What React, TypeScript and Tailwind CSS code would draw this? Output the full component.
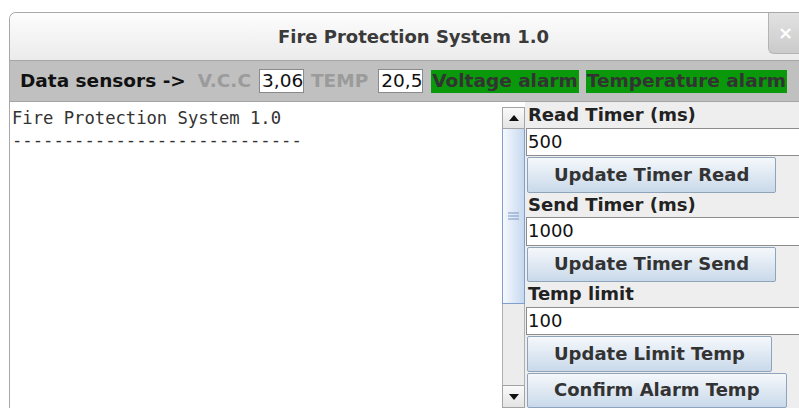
import React from 'react';

const sans = { fontFamily: '"DejaVu Sans", "Liberation Sans", sans-serif' };
const mono = { fontFamily: '"DejaVu Sans Mono", "Liberation Mono", monospace' };

const ArrowUp = () => (
  <svg width="10" height="6" viewBox="0 0 10 6">
    <polygon points="0,6 10,6 5,0" fill="#111" />
  </svg>
);

const ArrowDown = () => (
  <svg width="10" height="6" viewBox="0 0 10 6">
    <polygon points="0,0 10,0 5,6" fill="#111" />
  </svg>
);

const Field = ({ value }: { value: string }) => (
  <div className="h-[29px] ml-[1px] bg-white border border-[#8c8c8c] border-r-0 flex items-center pl-[1px] text-[18px] text-[#111] leading-none">
    {value}
  </div>
);

const Button = ({ label }: { label: string }) => (
  <div className="self-start h-[36px] ml-[2px] px-[26px] flex items-center rounded-[2px] border border-[#8ea4bb] bg-gradient-to-b from-[#f5f8fb] to-[#c9d9ea] text-[18px] font-bold text-[#333] leading-none">
    {label}
  </div>
);

const Label = ({ text }: { text: string }) => (
  <div className="h-[23px] pl-[3px] flex items-center text-[18px] font-bold text-[#222] leading-none">
    {text}
  </div>
);

export default function App() {
  return (
    <div className="w-[799px] h-[408px] overflow-hidden bg-white" style={sans}>
      <div className="ml-[9px] mt-[12px] h-[396px] flex flex-col border-l border-t border-[#a8a8a8] rounded-tl-[7px] overflow-hidden">
        {/* title bar */}
        <div className="relative h-[48px] shrink-0 flex items-center justify-center pl-[18px] bg-gradient-to-b from-[#fdfdfd] to-[#ebebeb] border-b border-[#a6a6a6]">
          <span className="text-[18px] font-bold text-[#3a3a3a]">Fire Protection System 1.0</span>
          <div className="absolute right-0 top-0 w-[31px] h-[41px] rounded-bl-[6px] border-l border-b border-[#b4b4b4] bg-gradient-to-b from-[#e2e2e2] to-[#cbcbcb] flex items-center justify-center">
            <span className="text-white text-[18px] font-bold leading-none ml-[3px]">×</span>
          </div>
        </div>

        {/* sensor bar */}
        <div className="h-[41px] shrink-0 flex items-center bg-[#c0c0c0] border-b border-[#a5a5a5] text-[18.5px] font-bold whitespace-nowrap">
          <span className="ml-[10px] text-[#111]">Data sensors -&gt;</span>
          <span className="ml-[12px] text-[#9b9b9b]">V.C.C</span>
          <span className="ml-[8px] h-[24px] w-[45px] px-[2px] bg-white border border-[#8a8a8a] font-normal text-[#111] flex items-center leading-none">3,06</span>
          <span className="ml-[7px] text-[#9b9b9b]">TEMP</span>
          <span className="ml-[10px] h-[24px] w-[45px] px-[2px] bg-white border border-[#8a8a8a] font-normal text-[#111] flex items-center leading-none">20,5</span>
          <span className="ml-[8px] h-[23px] px-[1px] bg-[#0a990a] text-[#333] flex items-center leading-none">Voltage alarm</span>
          <span className="ml-[7px] h-[23px] px-[1px] bg-[#0a990a] text-[#333] flex items-center leading-none">Temperature alarm</span>
        </div>

        {/* body */}
        <div className="flex-1 flex min-h-0">
          <div className="w-[492px] shrink-0 bg-white pt-[5px] pl-[2px] text-[17.2px] leading-[22px] text-[#333]" style={mono}>
            <div>Fire Protection System 1.0</div>
            <div>----------------------------</div>
          </div>

          {/* scroll bar */}
          <div className="w-[23px] shrink-0 pt-[5px] bg-white flex flex-col">
            <div className="h-[22px] shrink-0 border border-[#a4a4a4] bg-gradient-to-b from-[#fafafa] to-[#e4e4e4] flex items-center justify-center">
              <ArrowUp />
            </div>
            <div className="h-[175px] shrink-0 border border-t-0 border-[#7f9fce] bg-gradient-to-r from-[#f6f9fd] to-[#c7d9ef] flex items-center justify-center">
              <svg width="11" height="8" viewBox="0 0 11 8">
                <path d="M0 1h11M0 4h11M0 7h11" stroke="#7896c4" strokeWidth="1" />
              </svg>
            </div>
            <div className="flex-1 border-x border-[#b0b0b0] bg-[#ececec]" />
            <div className="h-[23px] shrink-0 border border-[#a4a4a4] bg-gradient-to-b from-[#fafafa] to-[#e4e4e4] flex items-center justify-center">
              <ArrowDown />
            </div>
          </div>

          {/* settings panel */}
          <div className="flex-1 bg-[#eeeeee] pt-[2px] flex flex-col gap-[1px]">
            <Label text="Read Timer (ms)" />
            <Field value="500" />
            <Button label="Update Timer Read" />
            <Label text="Send Timer (ms)" />
            <Field value="1000" />
            <Button label="Update Timer Send" />
            <Label text="Temp limit" />
            <Field value="100" />
            <Button label="Update Limit Temp" />
            <Button label="Confirm Alarm Temp" />
          </div>
        </div>
      </div>
    </div>
  );
}
